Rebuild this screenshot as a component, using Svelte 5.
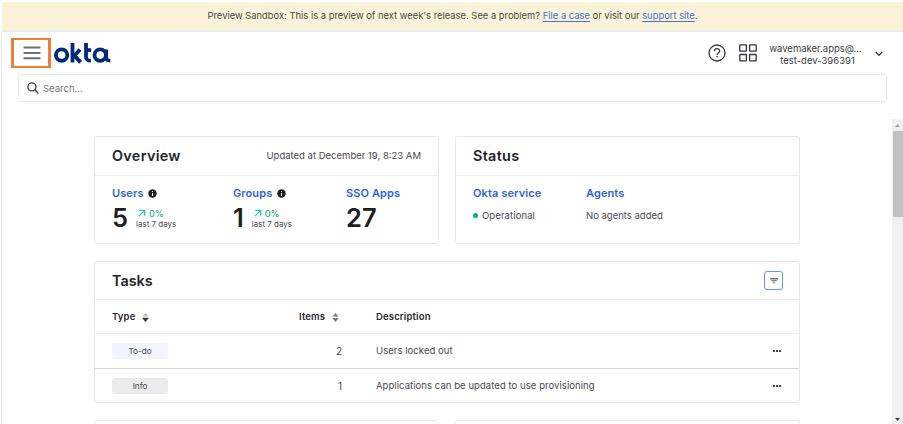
<script>
  const metrics = [
    { label: 'Users', value: '5', trend: true },
    { label: 'Groups', value: '1', trend: true },
    { label: 'SSO Apps', value: '27', trend: false }
  ];
  const tasks = [
    { type: 'To-do', items: 2, description: 'Users locked out' },
    { type: 'Info', items: 1, description: 'Applications can be updated to use provisioning' }
  ];
</script>

<div class="page">
  <div class="banner">
    <span>Preview Sandbox: This is a preview of next week's release. See a problem? <a href="#case">File a case</a> or visit our <a href="#support">support site</a>.</span>
  </div>

  <header>
    <button class="menu" aria-label="Menu">
      <svg width="18" height="14" viewBox="0 0 18 14"><path d="M0.5 1.5h17M0.5 7h17M0.5 12.3h17" stroke="#69737a" stroke-width="2" /></svg>
    </button>
    <svg class="logo" width="58" height="22" viewBox="0 0 58 22" fill="none" stroke="#00297a" stroke-width="3.8" aria-label="okta">
      <circle cx="8.6" cy="13.1" r="5.7" />
      <path d="M19.5 1.1v19.4M19.8 14.5h1.1L27 7.5M21.6 13.8l6 6.6M33 1.1v13.3c0 3 1.3 4.2 4.9 4.2M33 8.1h5.2M53.2 7.5v8.1c0 2.2.9 3 4.1 3" />
      <circle cx="47.2" cy="13.1" r="5.7" />
    </svg>
    <div class="tools">
      <svg width="18" height="18" viewBox="0 0 18 18" fill="none" stroke="#34373b" stroke-width="1.3">
        <circle cx="9" cy="9" r="8" /><path d="M6.5 7.2c0-3.4 5.2-3.3 5.2-.2 0 2-2.7 1.9-2.7 4" /><path d="M9 12v1.5" />
      </svg>
      <svg class="grid" width="18" height="18" viewBox="0 0 18 18" fill="none" stroke="#34373b" stroke-width="1.3">
        <rect x=".8" y=".8" width="6.6" height="6.4" rx=".5" /><rect x="10.6" y=".8" width="6.6" height="6.4" rx=".5" />
        <rect x=".8" y="10.5" width="6.6" height="6.4" rx=".5" /><rect x="10.6" y="10.5" width="6.6" height="6.4" rx=".5" />
      </svg>
      <div class="account"><span class="email">wavemaker.apps@...</span><span class="org">test-dev-396391</span></div>
      <svg class="chevron" width="8" height="6" viewBox="0 0 8 6" fill="none" stroke="#303338" stroke-width="1.3"><path d="M.8 1l3.2 3.4L7.2 1" /></svg>
    </div>
  </header>

  <div class="search">
    <svg width="12" height="12" viewBox="0 0 12 12" fill="none" stroke="#3e464c" stroke-width="1.4"><circle cx="4.9" cy="4.9" r="4" /><path d="M7.8 7.8l3.6 3.6" /></svg>
    <span>Search...</span>
  </div>

  <div class="body">
    <main>
      <div class="row">
        <section class="card top">
          <div class="head"><h2>Overview</h2><span class="updated">Updated at December 19, 8:23 AM</span></div>
          <div class="metrics">
            {#each metrics as m}
              <div>
                <h3>{m.label}
                  {#if m.trend}
                    <svg width="9" height="9" viewBox="0 0 9 9"><circle cx="4.5" cy="4.5" r="4.2" fill="#1d1d21" /><path d="M4.5 2v1.1M4.5 4.2v2.7" stroke="#fff" stroke-width="1" /></svg>
                  {/if}
                </h3>
                <div class="figure">
                  <strong>{m.value}</strong>
                  {#if m.trend}
                    <div class="trend">
                      <span class="pct"><svg width="8" height="8" viewBox="0 0 8 8" fill="none" stroke="#16d0ad" stroke-width="1.3"><path d="M1.2 1.4h5.5v5.4M6.5 1.6L1 7.1" /></svg>0%</span>
                      <span class="days">last 7 days</span>
                    </div>
                  {/if}
                </div>
              </div>
            {/each}
          </div>
        </section>

        <section class="card top">
          <div class="head"><h2 class="status-title">Status</h2></div>
          <div class="states">
            <div><h3>Okta service</h3><p class="operational"><i></i>Operational</p></div>
            <div><h3>Agents</h3><p>No agents added</p></div>
          </div>
        </section>
      </div>

      <section class="card tasks">
        <div class="head">
          <h2 class="tasks-title">Tasks</h2>
          <button class="filter" aria-label="Filter">
            <svg width="8" height="6" viewBox="0 0 8 6" fill="none"><path d="M0 .8h8" stroke="#444" stroke-width="1.1" /><path d="M1.2 2.6h5.6M2.6 4.1h2.8" stroke="#77797d" stroke-width="1" /><path d="M3.5 5.5h1" stroke="#999" /></svg>
          </button>
        </div>
        <div class="line labels">
          <span>Type <svg class="sort" width="7" height="9" viewBox="0 0 7 9"><path d="M3.5 0L6.5 3.6h-6z" fill="#b5b9bd" /><path d="M3.5 9L0 4.8h7z" fill="#303941" /></svg></span>
          <span class="items">Items <svg class="sort" width="7" height="9" viewBox="0 0 7 9"><path d="M3.5 0L6.5 3.6h-6zM3.5 9L.3 5h6.4z" fill="#747c84" /></svg></span>
          <span class="desc">Description</span>
        </div>
        {#each tasks as t}
          <div class="line task">
            <span><b class="pill" class:info={t.type === 'Info'}>{t.type}</b></span>
            <span class="count">{t.items}</span>
            <span class="desc">{t.description}</span>
            <svg width="8" height="2" viewBox="0 0 8 2"><path d="M0 0h2v2H0zM3 0h2v2H3zM6 0h2v2H6z" fill="#424245" /></svg>
          </div>
        {/each}
      </section>

      <div class="row next"><section class="card"></section><section class="card"></section></div>
    </main>
    <div class="scrollbar">
      <svg width="5" height="3" viewBox="0 0 5 3"><path d="M0 3L2.5 0 5 3z" fill="#a0a0a0" /></svg>
      <div class="thumb"></div>
      <svg class="down" width="5" height="3" viewBox="0 0 5 3"><path d="M0 0h5L2.5 3z" fill="#454545" /></svg>
    </div>
  </div>
</div>

<style>
  :global(body) { margin: 0; background: #fff; }
  * { box-sizing: border-box; }
  .page { width: 903px; height: 424px; padding-top: 2px; overflow: hidden; display: flex; flex-direction: column; background: linear-gradient(#e9eaec, #e9eaec) 1px 32px / 1px 100% no-repeat #fff; font-family: Inter, "Liberation Sans", sans-serif; font-size: 9.5px; color: #48494d; }
  .banner { flex: none; margin-left: 2px; height: 30px; background: #faf3da; border-bottom: 2px solid #ebebeb; display: flex; justify-content: center; align-items: center; padding: 0 0 1px; font-size: 9.4px; white-space: nowrap; }
  a { color: #4770d7; text-decoration: underline; text-underline-offset: 1.5px; }
  header { flex: none; height: 42px; display: flex; padding-left: 11px; }
  button { padding: 0; background: #fff; display: flex; align-items: center; justify-content: center; }
  .menu { width: 40px; height: 30px; margin-top: 6px; border: solid #ed8037; border-width: 2px 3px; padding-left: 1px; }
  .logo { margin: 10px 0 0 2px; }
  .tools { margin-left: auto; display: flex; align-items: center; padding: 0 20px 1px 0; }
  .grid { margin-left: 13px; }
  .account { width: 95px; margin-left: 11px; margin-top: 4px; display: flex; flex-direction: column; align-items: center; font-size: 9.5px; line-height: 12px; color: #3c3e43; }
  .org { margin-left: 4px; }
  .chevron { margin: 3px 0 0 12px; }
  .search { flex: none; margin: 0 16px 0 18px; height: 28px; border: 1px solid #e9e9eb; border-radius: 3px; display: flex; align-items: center; gap: 4px; padding-left: 8px; color: #74777b; }
  .body { flex: 1; min-height: 0; margin-top: 17px; display: flex; }
  main { width: 706px; margin: 17px 0 0 94px; flex: none; }
  .row { display: flex; gap: 16px; }
  .card { flex: 1; border: 1px solid #e8e8ea; border-radius: 3px; background: #fff; }
  .top { height: 108px; }
  .head { height: 39px; border-bottom: 1px solid #ebebec; padding: 0 17px 1px; display: flex; align-items: center; justify-content: space-between; }
  h2 { margin: 0; font-size: 14.4px; line-height: 18px; font-weight: 560; letter-spacing: 0.3px; color: #24252a; }
  .tasks-title { letter-spacing: 0; }
  h3 { margin: 0; font-size: 11px; line-height: 14px; font-weight: 570; letter-spacing: 0.1px; color: #2e63df; white-space: nowrap; }
  h3 svg { margin-left: 2px; vertical-align: -1px; }
  .metrics { padding: 10px 17px; display: grid; grid-template-columns: 121px 113px 1fr; }
  .figure { display: flex; height: 36px; align-items: center; }
  strong { font-size: 25.5px; line-height: 30px; font-weight: 580; color: #1d1d21; }
  .trend { display: flex; flex-direction: column; margin: 1px 0 0 8px; }
  .pct { display: flex; align-items: center; gap: 3px; padding-left: 2px; font-size: 9px; line-height: 11px; font-weight: 550; color: #1cb47c; }
  .days { font-size: 8px; line-height: 11px; white-space: nowrap; }
  .states { padding: 10px 17px; display: grid; grid-template-columns: 113px 1fr; }
  p { margin: 9px 0 0; line-height: 13px; white-space: nowrap; }
  .operational { display: flex; align-items: center; gap: 4px; letter-spacing: 0.1px; }
  i { width: 5px; height: 5px; border-radius: 50%; background: #00b67a; }
  .tasks { margin-top: 17px; height: 142px; }
  .tasks .head { height: 38px; padding: 0 16px 0 17px; }
  .filter { width: 19px; height: 19px; border: 1px solid #6496ec; border-radius: 3px; }
  .line { height: 34px; padding: 0 18px 0 17px; display: grid; grid-template-columns: 187px 43px 1fr 8px; align-items: center; }
  .labels { font-weight: 600; letter-spacing: 0.15px; color: #27292d; border-bottom: 1px solid #eeeeef; }
  .items { white-space: nowrap; }
  .sort { vertical-align: -2px; margin-left: 4px; }
  .line .desc { padding-left: 34px; }
  .count { text-align: right; font-size: 10px; }
  .task { padding-bottom: 1px; }
  .task .desc { letter-spacing: 0.06px; }
  .task + .task { height: 35px; border-top: 1px solid #d5d7d9; }
  .pill { display: flex; justify-content: center; align-items: center; width: 56px; height: 16px; border-radius: 3px; background: #f2f4ff; font-size: 8.2px; font-weight: 400; }
  .pill.info { background: #ebebed; }
  .next { margin-top: 17px; }
  .next .card { height: 30px; }
  .scrollbar { width: 11px; margin-left: auto; background: #f0f0f0; display: flex; flex-direction: column; align-items: center; padding: 5px 0 3px; }
  .thumb { width: 10px; height: 86px; margin-top: 4px; background: #c1c1c1; }
  .down { margin-top: auto; }
</style>
